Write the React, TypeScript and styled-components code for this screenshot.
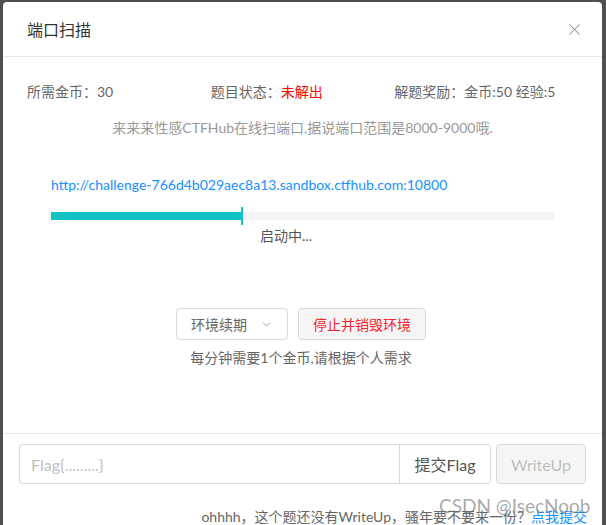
import React from "react";
import styled, { createGlobalStyle } from "styled-components";
import { ChevronDown, X } from "lucide-react";

const GlobalStyle = createGlobalStyle`
  html, body {
    margin: 0;
    padding: 0;
    background: #4f4f4f;
    height: 525px;
    overflow: hidden;
  }
  * { box-sizing: border-box; }
`;

const FONT = `Lato, "Noto Sans CJK SC", sans-serif`;

const INFO = [
  { label: "所需金币：", value: "30", danger: false },
  { label: "题目状态：", value: "未解出", danger: true },
  { label: "解题奖励：", value: "金币:50 经验:5", danger: false },
];

export default function App() {
  const progress = 38;

  return (
    <Page>
      <GlobalStyle />
      <Modal>
        <Header>
          <Title>端口扫描</Title>
          <CloseButton aria-label="close">
            <X size={19} strokeWidth={1.3} />
          </CloseButton>
        </Header>
        <Body>
          <InfoRow>
            {INFO.map((item) => (
              <InfoCell key={item.label}>
                {item.label}
                <InfoValue danger={item.danger}>{item.value}</InfoValue>
              </InfoCell>
            ))}
          </InfoRow>
          <Description>
            来来来性感CTFHub在线扫端口,据说端口范围是8000-9000哦.
          </Description>
          <EnvBlock>
            <EnvLink href="#">
              http://challenge-766d4b029aec8a13.sandbox.ctfhub.com:10800
            </EnvLink>
            <Track>
              <Fill style={{ width: `${progress}%` }} />
              <Marker style={{ left: `${progress}%` }} />
            </Track>
            <Status>启动中...</Status>
          </EnvBlock>
          <Actions>
            <Button>
              环境续期
              <ChevronDown size={13} strokeWidth={1.5} color="#8c8c8c" />
            </Button>
            <Button variant="danger">停止并销毁环境</Button>
          </Actions>
          <Hint>每分钟需要1个金币,请根据个人需求</Hint>
        </Body>
        <Footer>
          <SubmitRow>
            <InputGroup>
              <FlagInput placeholder="Flag{.........}" />
              <AddonButton>提交Flag</AddonButton>
            </InputGroup>
            <WriteUpButton disabled>WriteUp</WriteUpButton>
          </SubmitRow>
          <FooterNote>
            ohhhh，这个题还没有WriteUp，骚年要不要来一份？
            <NoteLink href="#">点我提交</NoteLink>
          </FooterNote>
          <Watermark>CSDN @IsecNoob</Watermark>
        </Footer>
      </Modal>
    </Page>
  );
}

const Page = styled.div`
  padding: 2px 4px 0 3px;
  font-family: ${FONT};
`;

const Modal = styled.div`
  width: 599px;
  height: 560px;
  background: #fff;
  border-radius: 4px 4px 0 0;
  display: flex;
  flex-direction: column;
`;

const Header = styled.div`
  display: flex;
  align-items: center;
  justify-content: space-between;
  height: 55px;
  padding: 0 0 0 24px;
  border-bottom: 1px solid #e8e8e8;
`;

const Title = styled.div`
  font-size: 16px;
  line-height: 22px;
  color: #333;
  margin-top: 1px;
`;

const CloseButton = styled.button`
  width: 56px;
  height: 55px;
  border: 0;
  background: none;
  padding: 0;
  display: flex;
  align-items: center;
  justify-content: center;
  color: #8c8c8c;
  cursor: pointer;
`;

const Body = styled.div`
  height: 376px;
  padding: 24px;
  display: flex;
  flex-direction: column;
  font-size: 14px;
  line-height: 22px;
  color: #666;
`;

const InfoRow = styled.div`
  display: grid;
  grid-template-columns: repeat(3, 1fr);
`;

const InfoCell = styled.div`
  white-space: nowrap;
`;

const InfoValue = styled.span<{ danger: boolean }>`
  color: ${(p) => (p.danger ? "#ff0000" : "#666")};
`;

const Description = styled.div`
  margin-top: 14px;
  text-align: center;
  color: #999;
`;

const EnvBlock = styled.div`
  margin-top: 35px;
  padding: 0 24px;
  display: flex;
  flex-direction: column;
`;

const EnvLink = styled.a`
  color: #1890ff;
  text-decoration: none;
`;

const Track = styled.div`
  position: relative;
  margin-top: 16px;
  height: 8px;
  background: #f5f5f5;
`;

const Fill = styled.div`
  height: 100%;
  background: #13c2c2;
`;

const Marker = styled.div`
  position: absolute;
  top: -5px;
  width: 2px;
  height: 18px;
  margin-left: -1px;
  background: #13c2c2;
`;

const Status = styled.div`
  margin-top: 5px;
  text-align: center;
  padding-right: 33px;
  color: #555;
`;

const Actions = styled.div`
  margin-top: 61px;
  display: flex;
  justify-content: center;
  gap: 10px;
  padding-right: 3px;
`;

const Button = styled.button<{ variant?: "danger" }>`
  height: 32px;
  padding: 0 14px;
  display: inline-flex;
  align-items: center;
  gap: 13px;
  font-family: ${FONT};
  font-size: 14px;
  border: 1px solid #d9d9d9;
  border-radius: 4px;
  background: ${(p) => (p.variant === "danger" ? "#f5f5f5" : "#fff")};
  color: ${(p) => (p.variant === "danger" ? "#f5222d" : "#666")};
  cursor: pointer;
`;

const Hint = styled.div`
  margin-top: 7px;
  text-align: center;
  padding-right: 3px;
`;

const Footer = styled.div`
  position: relative;
  border-top: 1px solid #e8e8e8;
  padding: 10px 15px 0 16px;
  display: flex;
  flex-direction: column;
`;

const SubmitRow = styled.div`
  display: flex;
  gap: 5px;
`;

const InputGroup = styled.div`
  display: flex;
  width: 472px;
`;

const FlagInput = styled.input`
  flex: 1;
  height: 40px;
  padding: 0 11px;
  font-family: ${FONT};
  font-size: 16px;
  border: 1px solid #d9d9d9;
  border-right: 0;
  border-radius: 4px 0 0 4px;
  outline: none;
  color: #666;

  &::placeholder {
    color: #bfbfbf;
  }
`;

const AddonButton = styled.button`
  width: 92px;
  height: 40px;
  font-family: ${FONT};
  font-size: 16px;
  color: #555;
  background: #fff;
  border: 1px solid #d9d9d9;
  border-radius: 0 4px 4px 0;
  cursor: pointer;
`;

const WriteUpButton = styled.button`
  width: 90px;
  height: 40px;
  font-family: ${FONT};
  font-size: 16px;
  color: rgba(0, 0, 0, 0.25);
  background: #f5f5f5;
  border: 1px solid #d9d9d9;
  border-radius: 4px;
`;

const FooterNote = styled.div`
  margin-top: 22px;
  text-align: right;
  font-size: 14px;
  line-height: 22px;
  color: #666;
  white-space: nowrap;
`;

const NoteLink = styled.a`
  color: #1890ff;
  text-decoration: none;
`;

const Watermark = styled.div`
  position: absolute;
  left: 436px;
  top: 60px;
  font-size: 19px;
  line-height: 24px;
  color: rgba(110, 110, 110, 0.6);
  white-space: nowrap;
  pointer-events: none;
`;
